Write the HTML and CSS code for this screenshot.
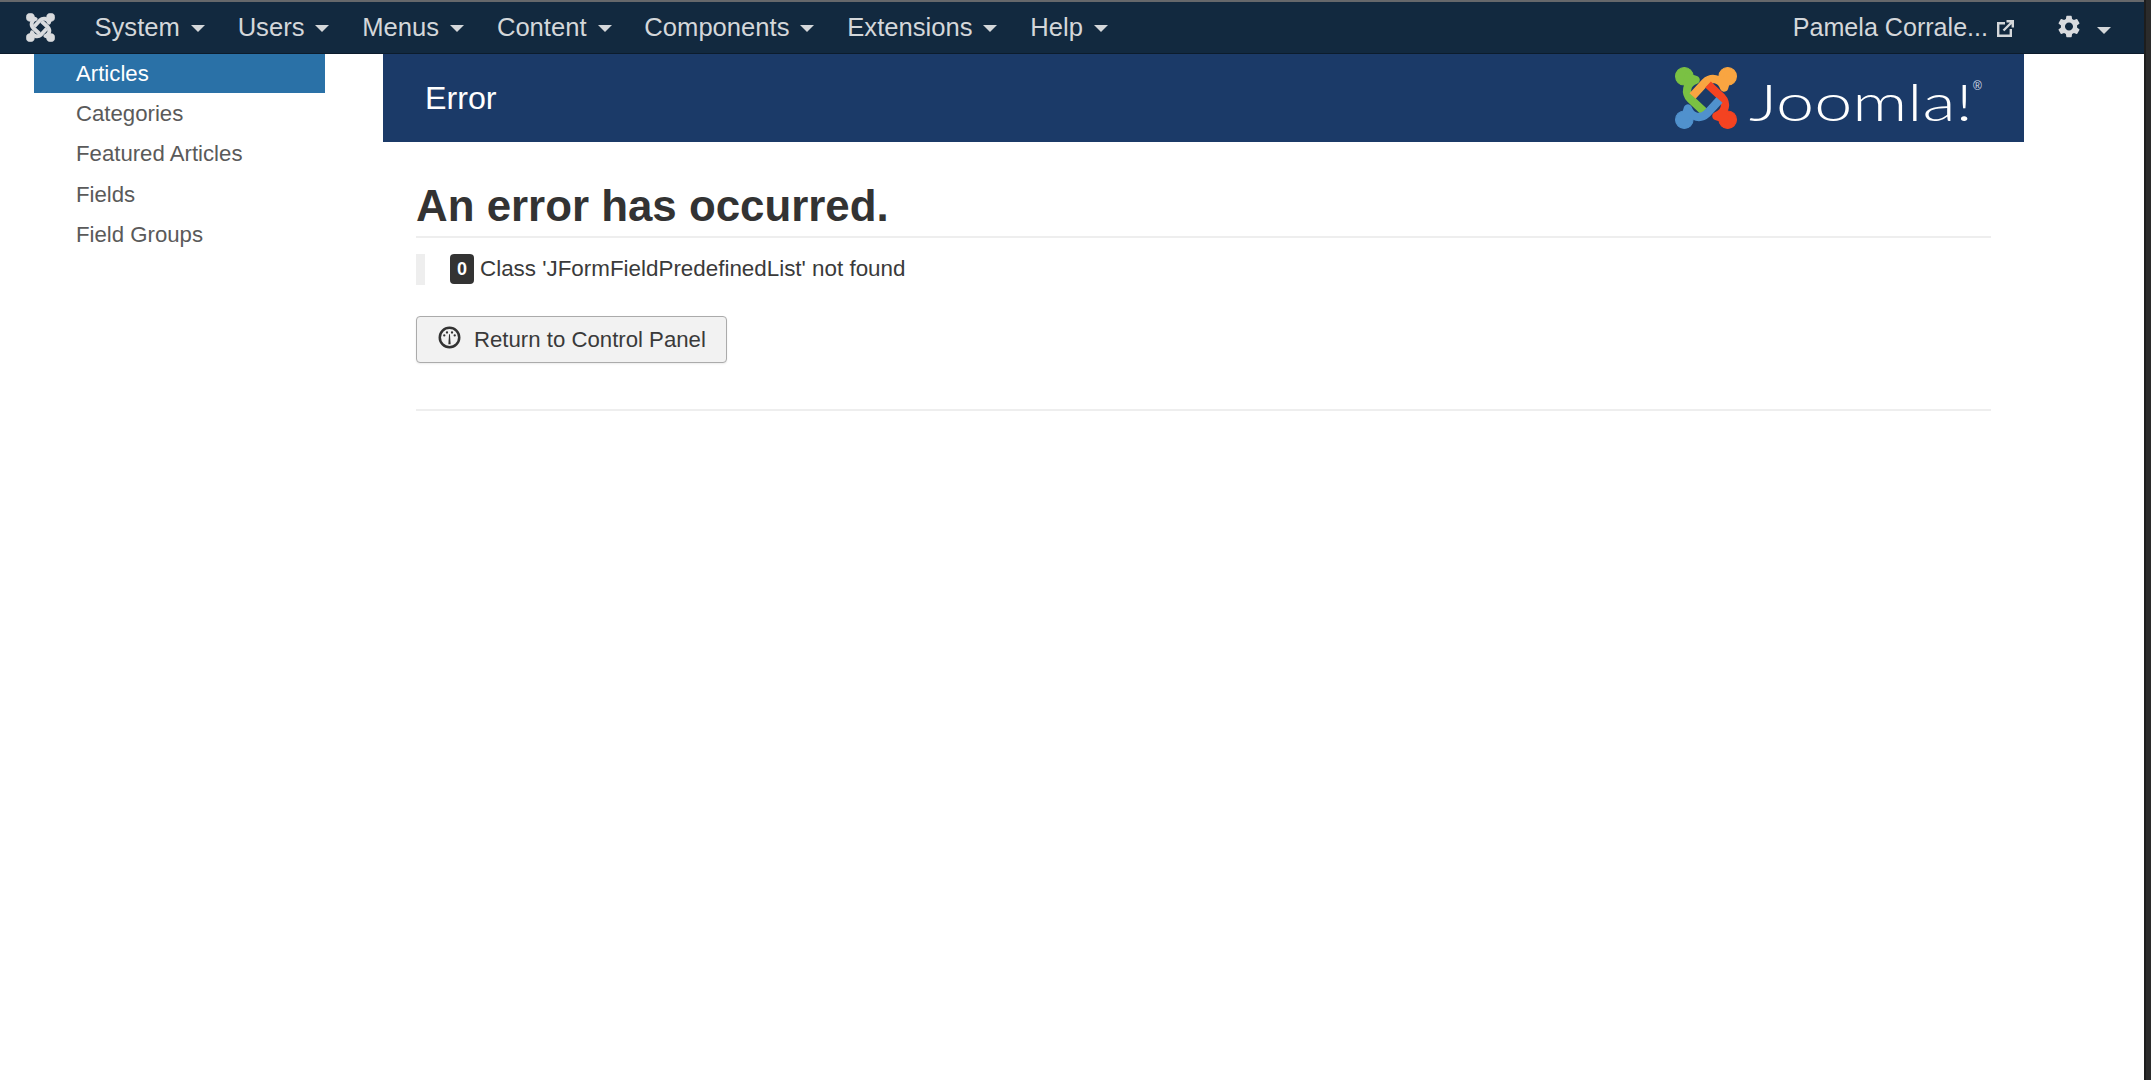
FILE: index.html
```html
<!DOCTYPE html>
<html lang="en">
<head>
<meta charset="utf-8">
<title>Error</title>
<link rel="stylesheet" href="styles.css">
</head>
<body>
<svg class="defs" width="0" height="0" aria-hidden="true">
  <defs>
    <g id="limb">
      <circle cx="9" cy="9" r="8.5"/>
      <path class="limb-line" d="M9 9 L20 12.5 C10.5 16 9.5 25 15 31 L28 43"/>
    </g>
  </defs>
</svg>
<div class="app">
  <div class="page">
    <nav class="navbar">
      <svg class="nav-logo" viewBox="0 0 60 60" aria-hidden="true">
        <use href="#limb"/>
        <use href="#limb" transform="rotate(90 30 30)"/>
        <use href="#limb" transform="rotate(180 30 30)"/>
        <use href="#limb" transform="rotate(270 30 30)"/>
      </svg>
      <ul class="menu">
        <li class="menu-item">System<span class="caret"></span></li>
        <li class="menu-item">Users<span class="caret"></span></li>
        <li class="menu-item">Menus<span class="caret"></span></li>
        <li class="menu-item">Content<span class="caret"></span></li>
        <li class="menu-item">Components<span class="caret"></span></li>
        <li class="menu-item">Extensions<span class="caret"></span></li>
        <li class="menu-item">Help<span class="caret"></span></li>
      </ul>
      <div class="nav-right">
        <span class="user">Pamela Corrale...</span>
        <svg class="ext-icon" viewBox="0 0 17 17" aria-hidden="true">
          <path d="M8 3.2H1.2V15.8H13.8V9" />
          <path d="M6.5 10.5L15 2M9.5 1.2H15.8V7.5" />
        </svg>
        <svg class="gear-icon" viewBox="2.2 1.8 19.6 20.4" aria-hidden="true">
          <path d="M19.14 12.94c.04-.3.06-.61.06-.94 0-.32-.02-.64-.07-.94l2.03-1.58a.49.49 0 0 0 .12-.61l-1.92-3.32a.488.488 0 0 0-.59-.22l-2.39.96c-.5-.38-1.03-.7-1.62-.94l-.36-2.54a.484.484 0 0 0-.48-.41h-3.84c-.24 0-.43.17-.47.41l-.36 2.54c-.59.24-1.13.57-1.62.94l-2.39-.96c-.22-.08-.47 0-.59.22L2.74 8.87c-.12.21-.08.47.12.61l2.03 1.58c-.05.3-.09.63-.09.94s.02.64.07.94l-2.03 1.58a.49.49 0 0 0-.12.61l1.92 3.32c.12.22.37.29.59.22l2.39-.96c.5.38 1.03.7 1.62.94l.36 2.54c.05.24.24.41.48.41h3.84c.24 0 .44-.17.47-.41l.36-2.54c.59-.24 1.13-.56 1.62-.94l2.39.96c.22.08.47 0 .59-.22l1.92-3.32c.12-.22.07-.47-.12-.61l-2.01-1.58zM12 15.6c-1.98 0-3.6-1.62-3.6-3.6s1.62-3.6 3.6-3.6 3.6 1.62 3.6 3.6-1.62 3.6-3.6 3.6z"/>
        </svg>
        <span class="caret caret-gear"></span>
      </div>
    </nav>
    <div class="body-row">
      <aside class="sidebar">
        <ul class="side-list">
          <li class="side-item"><a class="side-link is-active">Articles</a></li>
          <li class="side-item"><a class="side-link">Categories</a></li>
          <li class="side-item"><a class="side-link">Featured Articles</a></li>
          <li class="side-item"><a class="side-link">Fields</a></li>
          <li class="side-item"><a class="side-link">Field Groups</a></li>
        </ul>
      </aside>
      <main class="main">
        <header class="banner">
          <span class="banner-title">Error</span>
          <div class="brand">
            <svg class="brand-mark" viewBox="0 0 60 60" aria-hidden="true">
              <use class="c-green" href="#limb"/>
              <use class="c-orange" href="#limb" transform="rotate(90 30 30)"/>
              <use class="c-red" href="#limb" transform="rotate(180 30 30)"/>
              <use class="c-blue" href="#limb" transform="rotate(270 30 30)"/>
            </svg>
            <svg class="brand-word" viewBox="0 0 236 60">
              <text class="brand-text" x="0" y="51" textLength="224" lengthAdjust="spacingAndGlyphs">Joomla!</text>
              <text class="brand-reg" x="224" y="20">®</text>
            </svg>
          </div>
        </header>
        <section class="content">
          <h1 class="title">An error has occurred.</h1>
          <blockquote class="message"><span class="badge">0</span><span class="message-text">Class 'JFormFieldPredefinedList' not found</span></blockquote>
          <a class="btn">
            <svg class="dash-icon" viewBox="0 0 22 22" aria-hidden="true">
              <circle class="dash-ring" cx="11" cy="11" r="9.3"/>
              <circle cx="6" cy="9" r="1.1"/>
              <circle cx="8.6" cy="6.2" r="1.1"/>
              <circle cx="13.4" cy="6.2" r="1.1"/>
              <circle cx="16" cy="9" r="1.1"/>
              <path d="M9.9 17.5L10.6 8h0.8L12.1 17.5z"/>
            </svg>
            <span class="btn-label">Return to Control Panel</span>
          </a>
          <hr class="rule">
        </section>
      </main>
    </div>
  </div>
  <div class="edge"></div>
</div>
</body>
</html>
```
FILE: styles.css
```css
* { box-sizing: border-box; }
html, body { margin: 0; height: 100%; }
body {
  font-family: "Liberation Sans", Arial, sans-serif;
  font-size: 22.2px;
  color: #3a3a3a;
  background: #fff;
}
.defs { position: absolute; }
.app { display: flex; height: 1080px; overflow: hidden; }
.page { flex: 1; min-width: 0; }
.edge {
  width: 7px;
  background: #2b2b2b;
  border-left: 2px solid #1d1d1d;
}

/* top bar */
.navbar {
  height: 54px;
  display: flex;
  align-items: center;
  background: #12293f;
  border-top: 2px solid #66686b;
  border-bottom: 1px solid #0c1c2c;
  color: #d4d7da;
  font-size: 25.6px;
  padding-left: 26px;
}
.nav-logo {
  width: 29px;
  height: 29px;
  margin-right: 39.5px;
  margin-top: -1px;
  flex: none;
  fill: #d9dbde;
  stroke: #d9dbde;
}
.limb-line { fill: none; stroke-width: 8; stroke-linecap: butt; stroke-linejoin: round; }
.menu {
  list-style: none;
  margin: 0;
  padding: 0;
  display: flex;
  gap: 32.8px;
}
.menu-item { display: flex; align-items: center; gap: 11px; white-space: nowrap; }
.caret {
  width: 0;
  height: 0;
  border-left: 7px solid transparent;
  border-right: 7px solid transparent;
  border-top: 7px solid #d4d7da;
  margin-top: 2px;
}
.nav-right {
  margin-left: auto;
  display: flex;
  align-items: center;
  padding-right: 33px;
}
.user { white-space: nowrap; margin-right: 9px; font-size: 25.1px; }
.ext-icon {
  width: 17px;
  height: 17px;
  fill: none;
  stroke: #d4d7da;
  stroke-width: 2.4;
  margin-top: 1px;
  margin-right: 44px;
}
.gear-icon {
  width: 22px;
  height: 23px;
  fill: #d9dbde;
  margin-top: -3px;
  margin-right: 17px;
}
.caret-gear { margin-top: 5px; }

/* layout */
.body-row { display: flex; }
.sidebar { width: 383px; padding-left: 34px; flex: none; }
.side-list { list-style: none; margin: 0; padding: 0; width: 291px; }
.side-item { height: 40.4px; }
.side-link {
  display: flex;
  align-items: center;
  height: 39px;
  padding-left: 42px;
  color: #5a5a5a;
}
.side-link.is-active { background: #2a71a7; color: #fff; }

.main { width: 1641px; flex: none; }
.banner {
  height: 88px;
  background: #1b3a68;
  display: flex;
  align-items: center;
  justify-content: space-between;
  padding: 0 39px 0 42px;
  color: #fff;
}
.banner-title { font-size: 32.2px; }
.brand { display: flex; align-items: center; }
.brand-mark { width: 62px; height: 62px; flex: none; margin-right: 12px; }
.c-green { fill: #7ac143; stroke: #7ac143; }
.c-orange { fill: #f9a541; stroke: #f9a541; }
.c-red { fill: #f44321; stroke: #f44321; }
.c-blue { fill: #5091cd; stroke: #5091cd; }
.brand-word { width: 236px; height: 60px; flex: none; margin-top: 4px; overflow: visible; }
.brand-text {
  font-family: Lato, "Liberation Sans", sans-serif;
  font-weight: 300;
  font-size: 52px;
  fill: #fff;
}
.brand-reg {
  font-family: "Liberation Sans", sans-serif;
  font-size: 12px;
  fill: #d7deea;
}

/* content */
.content { padding: 0 33px; }
.title {
  margin: 37.5px 0 0;
  font-size: 43.85px;
  line-height: 52px;
  font-weight: 700;
  color: #333;
  padding-bottom: 4px;
  border-bottom: 2px solid #eee;
}
.message {
  margin: 16px 0 0;
  height: 31px;
  border-left: 9px solid #eee;
  padding-left: 25px;
  display: flex;
  align-items: center;
  gap: 6px;
  white-space: nowrap;
}
.message-text { font-size: 22.4px; }
.badge {
  width: 24px;
  height: 30px;
  border-radius: 4px;
  background: #333;
  color: #fff;
  font-weight: 700;
  font-size: 18px;
  display: flex;
  align-items: center;
  justify-content: center;
}
.btn {
  margin-top: 31px;
  width: 311px;
  height: 47px;
  display: flex;
  align-items: center;
  padding-left: 21px;
  gap: 13px;
  background: #f2f2f2;
  border: 1.5px solid #ababab;
  border-radius: 4px;
  box-shadow: 0 1px 2px rgba(0, 0, 0, .08);
  color: #3a3a3a;
}
.btn-label { padding-top: 1px; }
.dash-icon { width: 23px; height: 23px; fill: #333; flex: none; margin-top: -3px; }
.dash-ring { fill: none; stroke: #333; stroke-width: 2.4; }
.rule { margin: 46px 0 0; border: 0; border-top: 2px solid #eee; }
```
